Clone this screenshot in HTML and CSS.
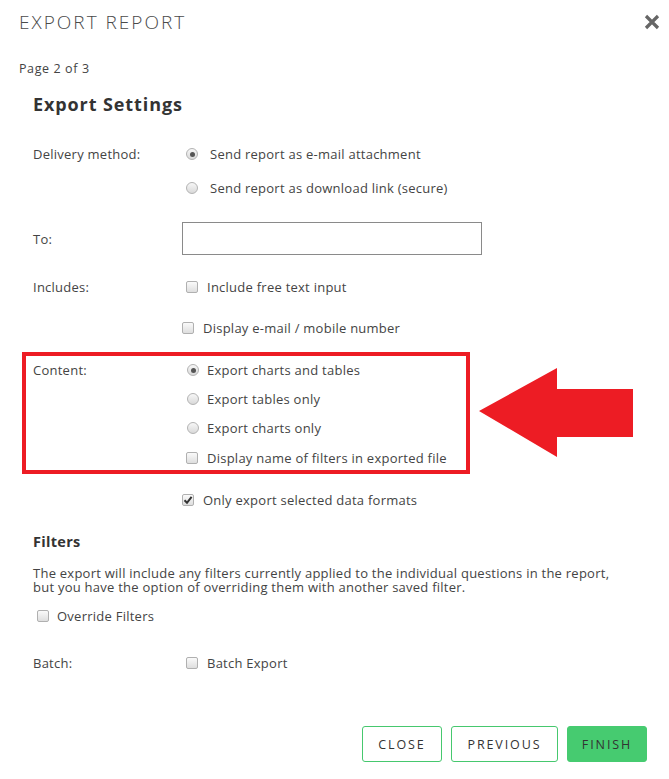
FILE: index.html
```html
<!DOCTYPE html>
<html>
<head>
<meta charset="utf-8">
<link rel="stylesheet" href="styles.css">
</head>
<body>
<div class="modal">
  <div class="header">
    <div class="title">EXPORT REPORT</div>
    <div class="close-x">
      <svg width="16" height="16" viewBox="0 0 16 16"><path d="M2 2 L14 14 M14 2 L2 14" stroke="#666" stroke-width="3.2" stroke-linecap="butt"/></svg>
    </div>
  </div>
  <div class="page-num">Page 2 of 3</div>
  <div class="body">
    <h2 class="h-settings">Export Settings</h2>

    <div class="row r-delivery">
      <div class="label">Delivery method:</div>
      <div class="opt opt-wide"><span class="radio checked"></span><span>Send report as e-mail attachment</span></div>
    </div>
    <div class="row r-delivery2">
      <div class="label"></div>
      <div class="opt opt-wide"><span class="radio"></span><span>Send report as download link (secure)</span></div>
    </div>

    <div class="row r-to">
      <div class="label">To:</div>
      <div class="input"></div>
    </div>

    <div class="row r-includes">
      <div class="label">Includes:</div>
      <div class="opt"><span class="check"></span><span>Include free text input</span></div>
    </div>
    <div class="row r-display">
      <div class="label"></div>
      <div class="opt opt-left"><span class="check"></span><span>Display e-mail / mobile number</span></div>
    </div>

    <div class="content-area">
      <div class="content-box">
        <div class="row cb-1">
          <div class="label">Content:</div>
          <div class="opt"><span class="radio checked"></span><span>Export charts and tables</span></div>
        </div>
        <div class="row cb-n">
          <div class="label"></div>
          <div class="opt"><span class="radio"></span><span>Export tables only</span></div>
        </div>
        <div class="row cb-n">
          <div class="label"></div>
          <div class="opt"><span class="radio"></span><span>Export charts only</span></div>
        </div>
        <div class="row cb-4">
          <div class="label"></div>
          <div class="opt opt-cb"><span class="check"></span><span>Display name of filters in exported file</span></div>
        </div>
      </div>
      <svg class="arrow" width="160" height="92" viewBox="0 0 160 92"><path d="M1 43 L79 0 L79 21 L155 21 L155 69 L79 69 L79 89 Z" fill="#ed1c24"/></svg>
    </div>

    <div class="row r-only">
      <div class="label"></div>
      <div class="opt opt-left"><span class="check checked"><svg width="10" height="10" viewBox="0 0 10 10"><path d="M1.5 5.2 L4 7.8 L8.6 1.8" fill="none" stroke="#333" stroke-width="2"/></svg></span><span>Only export selected data formats</span></div>
    </div>

    <h3 class="h-filters">Filters</h3>
    <p class="para">The export will include any filters currently applied to the individual questions in the report, but you have the option of overriding them with another saved filter.</p>
    <div class="override"><span class="check"></span><span>Override Filters</span></div>

    <div class="row r-batch">
      <div class="label">Batch:</div>
      <div class="opt"><span class="check"></span><span>Batch Export</span></div>
    </div>
  </div>
  <div class="footer">
    <button class="btn btn-close">CLOSE</button>
    <button class="btn btn-prev">PREVIOUS</button>
    <button class="btn btn-finish">FINISH</button>
  </div>
</div>
</body>
</html>
```

FILE: styles.css
```css
* { box-sizing: border-box; }
html, body { margin: 0; padding: 0; background: #fff; }
body {
  font-family: "Open Sans", "Liberation Sans", sans-serif;
  color: #444;
  font-size: 13px;
  letter-spacing: 0.25px;
  width: 669px;
  height: 779px;
  overflow: hidden;
}
.modal { width: 669px; }
.header {
  display: flex;
  justify-content: space-between;
  align-items: center;
  padding: 12px 9px 0 19px;
  height: 32px;
}
.title {
  font-size: 19px;
  font-weight: 300;
  color: #4a4a4a;
  line-height: 20px;
  letter-spacing: 2px;
}
.close-x { width: 16px; height: 16px; display: flex; }
.page-num {
  margin: 27px 0 0 19px;
  line-height: 20px;
  font-size: 12.5px;
  letter-spacing: 0.6px;
  color: #444;
}
.body { padding: 0 0 0 33px; }
.h-settings {
  margin: 13px 0 0 0;
  font-size: 18px;
  font-weight: 700;
  line-height: 24px;
  letter-spacing: 0.9px;
  color: #333;
}
.row {
  display: grid;
  grid-template-columns: 153px 1fr;
  align-items: center;
  height: 20px;
}
.label { line-height: 20px; color: #444; }
.opt {
  display: flex;
  align-items: center;
  gap: 9px;
  line-height: 20px;
  color: #444;
}
.opt-wide { gap: 12px; }
.opt-left { margin-left: -4px; }
.r-delivery { margin-top: 28px; }
.r-delivery2 { margin-top: 14px; }
.r-to { margin-top: 24px; height: 33px; }
.input {
  margin-left: -4px;
  width: 300px;
  height: 33px;
  border: 1px solid #8a8a8a;
  background: #fff;
}
.r-includes { margin-top: 22px; }
.r-display { margin-top: 21px; }

.content-area {
  display: flex;
  align-items: center;
  margin-left: -11px;
  margin-top: 14px;
  gap: 8px;
}
.content-box {
  width: 448px;
  border: 4px solid #ed1c24;
  padding: 4px 0 2px 7px;
}
.content-box .opt { gap: 8px; margin-left: 1px; }
.content-box .opt-cb { margin-left: 0; gap: 9px; }
.cb-n { margin-top: 9px; }
.cb-4 { margin-top: 10px; }
.arrow { display: block; margin-top: 2px; }

.r-only { margin-top: 16px; }
.h-filters {
  margin: 22px 0 0 0;
  font-size: 14.5px;
  font-weight: 700;
  line-height: 20px;
  letter-spacing: 0.3px;
  color: #333;
}
.para {
  margin: 14px 0 0 0;
  font-size: 13px;
  line-height: 14px;
  letter-spacing: 0.25px;
  color: #444;
  width: 590px;
}
.override {
  display: flex;
  align-items: center;
  gap: 8px;
  margin: 12px 0 0 4px;
  line-height: 20px;
}
.r-batch { margin-top: 27px; }

.radio {
  width: 12px;
  height: 12px;
  border-radius: 50%;
  border: 1px solid #b3b3b3;
  background: linear-gradient(#f7f7f7, #d9d9d9);
  display: inline-flex;
  align-items: center;
  justify-content: center;
  flex: none;
}
.radio.checked::after {
  content: "";
  width: 5px;
  height: 5px;
  border-radius: 50%;
  background: #555;
}
.check {
  width: 12px;
  height: 12px;
  border-radius: 2px;
  border: 1px solid #b0b0b0;
  background: linear-gradient(#fafafa, #dedede);
  display: inline-flex;
  align-items: center;
  justify-content: center;
  flex: none;
}

.footer {
  display: flex;
  justify-content: flex-end;
  gap: 9px;
  padding: 0 22px 0 0;
  margin-top: 53px;
}
.btn {
  height: 36px;
  border: 1px solid #46c86e;
  border-radius: 3px;
  background: #fff;
  font-family: "Open Sans", "Liberation Sans", sans-serif;
  font-size: 12.5px;
  letter-spacing: 1.9px;
  color: #333;
  padding: 0;
  cursor: pointer;
}
.btn-close { width: 80px; }
.btn-prev { width: 107px; }
.btn-finish { width: 80px; background: #46cb70; border-color: #46cb70; }
```
